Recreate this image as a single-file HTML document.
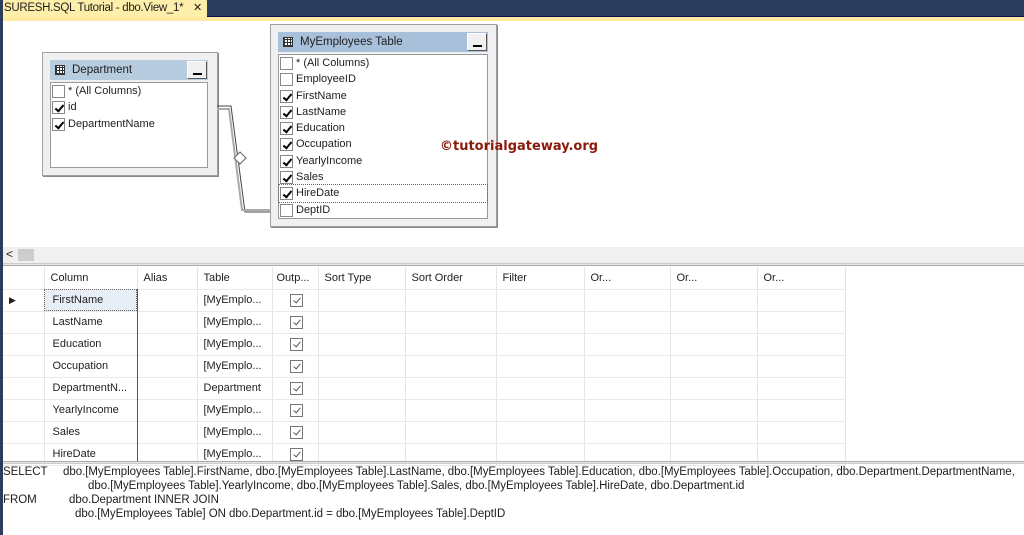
<!DOCTYPE html>
<html><head><meta charset="utf-8"><style>
*{margin:0;padding:0;box-sizing:border-box}
body{width:1024px;height:535px;overflow:hidden;background:#fff;font-family:"Liberation Sans",sans-serif;font-size:11px;color:#1e1e1e;position:relative}
.abs{position:absolute}
.tb{left:0;top:0;width:1024px;height:17px;background:#2c3c5c;border-bottom:1px solid #0a0a50}
.tab{left:0;top:0;width:207px;height:17px;background:#fdeeaa;font-size:11.5px;line-height:16px;padding-left:4px;color:#1e1e1e;letter-spacing:-0.3px;white-space:nowrap}
.tab span{position:absolute;left:193px;top:0;font-size:11px}
.ys{left:0;top:17px;width:1024px;height:4px;background:#fde9a0}
.lb{left:0;top:0;width:3px;height:535px;background:#2c3c5c}
.box{background:#f0f0f0;border:1px solid #a0a0a0;box-shadow:1px 1px 0 #888}
.title{background:#b8cce0;height:20px;line-height:20px;padding-left:22px;font-size:11.5px}
.title.b{background:#a8c0da}
.ico{position:absolute;left:5px;top:5px;width:10px;height:10px;border:1px solid #333;background:repeating-linear-gradient(90deg,#333 0 1px,transparent 1px 3px),repeating-linear-gradient(0deg,#333 0 1px,#fff 1px 3px)}
.min{position:absolute;right:1px;top:1px;width:20px;height:18px;background:#f0f0f0;border:1px solid #fff;border-right-color:#555;border-bottom-color:#555}
.min:after{content:"";position:absolute;left:5px;top:11px;width:9px;height:2px;background:#000}
.list{background:#fff;border:1px solid #999;position:absolute}
.it{position:relative;height:16.3px;line-height:16px;padding-left:17px;font-size:11px}
.cb{position:absolute;left:1px;top:2px;width:13px;height:13px;border:1px solid #888;background:#fff}
.cb.c:after{content:"";position:absolute;left:4px;top:1px;width:3px;height:7px;border:solid #000;border-width:0 2px 2px 0;transform:rotate(40deg)}
.grid td{border-right:1px solid #e4e4e4;border-bottom:1px solid #e8e8e8;height:22px;padding-left:6px;white-space:nowrap;overflow:hidden}
.grid{border-collapse:collapse;table-layout:fixed;font-size:11px}
.gc{display:inline-block;width:13px;height:13px;border:1px solid #777;position:relative;vertical-align:middle;margin-left:11px}
.gc:after{content:"";position:absolute;left:4px;top:1px;width:3px;height:6px;border:solid #555;border-width:0 1px 1px 0;transform:rotate(40deg)}
.sql{font-size:11.5px;line-height:14px;letter-spacing:-0.04px}
</style></head><body>
<div class="abs tb"></div>
<div class="abs tab">SURESH.SQL Tutorial - dbo.View_1*<span>✕</span></div>
<div class="abs ys"></div>
<div class="abs lb"></div>

<div class="abs box" style="left:42px;top:52px;width:176px;height:124px"></div>
<div class="abs title" style="left:50px;top:60px;width:158px">Department<div class="ico"></div><div class="min"></div></div>
<div class="list" style="left:50px;top:82px;width:158px;height:86px">
<div class="it"><div class="cb"></div>* (All Columns)</div>
<div class="it"><div class="cb c"></div>id</div>
<div class="it"><div class="cb c"></div>DepartmentName</div>
</div>

<svg class="abs" style="left:215px;top:100px" width="60" height="115">
<path d="M2 6 H16 L30 112 H56" stroke="#444" fill="none" stroke-width="1"/>
<path d="M2 9 H14 L27 110 H56" stroke="#aaa" fill="none" stroke-width="2"/>
<path d="M25 52 L31 58 L25 64 L19 58Z" fill="#fff" stroke="#666"/>
</svg>

<div class="abs box" style="left:270px;top:24px;width:227px;height:203px"></div>
<div class="abs title b" style="left:278px;top:32px;width:210px">MyEmployees Table<div class="ico"></div><div class="min"></div></div>
<div class="list" style="left:278px;top:54px;width:210px;height:165px">
<div class="it"><div class="cb"></div>* (All Columns)</div>
<div class="it"><div class="cb"></div>EmployeeID</div>
<div class="it"><div class="cb c"></div>FirstName</div>
<div class="it"><div class="cb c"></div>LastName</div>
<div class="it"><div class="cb c"></div>Education</div>
<div class="it"><div class="cb c"></div>Occupation</div>
<div class="it"><div class="cb c"></div>YearlyIncome</div>
<div class="it"><div class="cb c"></div>Sales</div>
<div class="it" style="outline:1px dotted #666"><div class="cb c"></div>HireDate</div>
<div class="it"><div class="cb"></div>DeptID</div>
</div>
<div class="abs" style="left:440px;top:139px;color:#8b1a0a;font-weight:bold;font-size:13px;font-family:'DejaVu Sans',sans-serif">©tutorialgateway.org</div>

<div class="abs" style="left:3px;top:247px;width:1021px;height:16px;background:#f0f0f0"></div>
<div class="abs" style="left:6px;top:247px;font-size:12px">&lt;</div>
<div class="abs" style="left:18px;top:249px;width:16px;height:12px;background:#cdcdcd"></div>
<div class="abs" style="left:3px;top:263px;width:1021px;height:3px;border-top:1px solid #ccc;border-bottom:1px solid #aaa;background:#e6e6e6"></div>

<table class="grid abs" style="left:3px;top:267px;width:842px">
<colgroup><col style="width:41px"><col style="width:93px"><col style="width:60px"><col style="width:75px"><col style="width:46px"><col style="width:87px"><col style="width:91px"><col style="width:88px"><col style="width:86px"><col style="width:87px"><col style="width:88px"></colgroup>
<tr><td></td><td>Column</td><td>Alias</td><td>Table</td><td style="padding-left:4px">Outp...</td><td>Sort Type</td><td>Sort Order</td><td>Filter</td><td>Or...</td><td>Or...</td><td>Or...</td></tr>
<tr><td style="font-size:9px">▶</td><td style="background:#e8eef6;outline:1px dotted #666;outline-offset:-1px;padding-left:8px">FirstName</td><td></td><td>[MyEmplo...</td><td><span class="gc"></span></td><td></td><td></td><td></td><td></td><td></td><td></td></tr>
<tr><td></td><td style="padding-left:8px">LastName</td><td></td><td>[MyEmplo...</td><td><span class="gc"></span></td><td></td><td></td><td></td><td></td><td></td><td></td></tr>
<tr><td></td><td style="padding-left:8px">Education</td><td></td><td>[MyEmplo...</td><td><span class="gc"></span></td><td></td><td></td><td></td><td></td><td></td><td></td></tr>
<tr><td></td><td style="padding-left:8px">Occupation</td><td></td><td>[MyEmplo...</td><td><span class="gc"></span></td><td></td><td></td><td></td><td></td><td></td><td></td></tr>
<tr><td></td><td style="padding-left:8px">DepartmentN...</td><td></td><td>Department</td><td><span class="gc"></span></td><td></td><td></td><td></td><td></td><td></td><td></td></tr>
<tr><td></td><td style="padding-left:8px">YearlyIncome</td><td></td><td>[MyEmplo...</td><td><span class="gc"></span></td><td></td><td></td><td></td><td></td><td></td><td></td></tr>
<tr><td></td><td style="padding-left:8px">Sales</td><td></td><td>[MyEmplo...</td><td><span class="gc"></span></td><td></td><td></td><td></td><td></td><td></td><td></td></tr>
<tr><td></td><td style="padding-left:8px">HireDate</td><td></td><td>[MyEmplo...</td><td><span class="gc"></span></td><td></td><td></td><td></td><td></td><td></td><td></td></tr>
</table>
<div class="abs" style="left:137px;top:289px;width:1px;height:173px;background:#555"></div>

<div class="abs" style="left:3px;top:461px;width:1021px;height:3px;border-top:1px solid #aaa;border-bottom:1px solid #ccc;background:#e6e6e6"></div>
<div class="abs sql" style="left:3px;top:465px;width:1021px">
<div>SELECT<span style="position:absolute;left:60px;white-space:nowrap">dbo.[MyEmployees Table].FirstName, dbo.[MyEmployees Table].LastName, dbo.[MyEmployees Table].Education, dbo.[MyEmployees Table].Occupation, dbo.Department.DepartmentName,</span></div>
<div style="padding-left:85px;white-space:nowrap">dbo.[MyEmployees Table].YearlyIncome, dbo.[MyEmployees Table].Sales, dbo.[MyEmployees Table].HireDate, dbo.Department.id</div>
<div>FROM<span style="position:absolute;left:66px">dbo.Department INNER JOIN</span></div>
<div style="padding-left:72px">dbo.[MyEmployees Table] ON dbo.Department.id = dbo.[MyEmployees Table].DeptID</div>
</div>
</body></html>
